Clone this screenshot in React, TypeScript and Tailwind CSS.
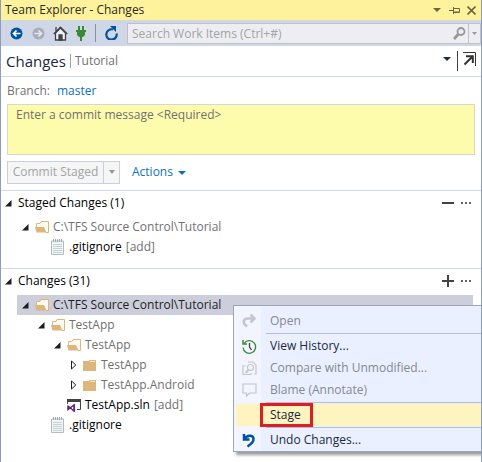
import React from "react";

function Caret({ className = "" }: { className?: string }) {
  return (
    <svg width="8" height="4" viewBox="0 0 8 4" className={className} aria-hidden="true">
      <path d="M0 0h8L4 4z" fill="currentColor" />
    </svg>
  );
}

function Expanded() {
  return (
    <svg width="7" height="7" viewBox="0 0 7 7" aria-hidden="true">
      <path d="M6.5 0v6.5H0z" fill="#1e1e1e" />
    </svg>
  );
}

function Collapsed() {
  return (
    <svg width="7" height="10" viewBox="0 0 7 10" aria-hidden="true">
      <path d="M1.500 1v8l4.300-4z" fill="#fff" stroke="#1e1e1e" />
    </svg>
  );
}

function FolderOpen() {
  return (
    <svg width="14" height="13" viewBox="0 0 14 13" aria-hidden="true">
      <path d="M1.500 7V2.500h3.500l1-2h7.500v11H11" fill="#fffaf0" stroke="#dcb67a" />
      <path d="M0 6h9l2.500 5.500H1.500z" fill="#dcb67a" />
    </svg>
  );
}

function FolderClosed() {
  return (
    <svg width="14" height="13" viewBox="0 0 14 13" aria-hidden="true">
      <path d="M0 2h5.500l1-1H13v11H0z" fill="#dcb67a" />
      <path d="M7 2.500h5" stroke="#f5e6c8" />
    </svg>
  );
}

function TextFile() {
  return (
    <svg width="14" height="16" viewBox="0 0 14 16" aria-hidden="true">
      <path d="M.5 2h12v13.500H.5z" fill="#f0f4f5" stroke="#b4babd" />
      <path d="M2.500 0v3M4.500 0v3M6.500 0v3M8.500 0v3M10.500 0v3" stroke="#a3abaf" />
      <path d="M2 5.500h9M2 7.500h9M2 9.500h9M2 11.500h9M2 13.500h9" stroke="#c6d2d6" />
    </svg>
  );
}

function Solution() {
  return (
    <svg width="15" height="14" viewBox="0 0 15 14" aria-hidden="true">
      <path d="M.5 6V1.500h13v10H10" fill="#fff" stroke="#424242" />
      <path d="M0 1h14v3H0z" fill="#424242" />
      <path d="M1 7.500v4l6-4.500v6L1 8M7.300 6.500v7" fill="none" stroke="#68217a" strokeWidth="1.500" />
    </svg>
  );
}

const indents = ["pl-[5px]", "pl-[21px]", "pl-[37px]", "pl-[53px]"];

type RowProps = {
  level: number;
  state?: "open" | "closed";
  icon: React.ReactNode;
  name: string;
  note?: string;
  tone?: string;
  selected?: boolean;
};

function TreeRow({ level, state, icon, name, note, tone = "text-[#717171]", selected }: RowProps) {
  return (
    <li
      role="treeitem"
      aria-level={level + 1}
      aria-selected={!!selected}
      className={`flex h-5 items-center whitespace-nowrap ${indents[level]} ${selected ? "bg-[#cccedb]" : ""}`}
    >
      <span className="flex w-[13px] shrink-0">
        {state && (
          <button type="button" aria-label={`Toggle ${name}`}>
            {state === "open" ? <Expanded /> : <Collapsed />}
          </button>
        )}
      </span>
      <span className="flex w-[18px] shrink-0">{icon}</span>
      <span className={tone}>{name}</span>
      {note && <span className="ml-1 text-[#717171]">{note}</span>}
    </li>
  );
}

function SectionHeader({ title, action }: { title: string; action: "minus" | "plus" }) {
  return (
    <div className="flex h-6 items-center pr-[9px] pl-1">
      <button type="button" aria-label={`Toggle ${title}`} className="w-[13px]">
        <Expanded />
      </button>
      <h2 className="flex-1 font-medium text-black">{title}</h2>
      <button type="button" aria-label={action === "plus" ? "Stage all" : "Unstage all"}>
        <svg width="12" height="12" viewBox="0 0 12 12">
          <path d={action === "plus" ? "M0 6h12M6 0v12" : "M0 6h12"} stroke="#424242" strokeWidth="2" />
        </svg>
      </button>
      <button type="button" aria-label={`More options for ${title}`} className="ml-[7px]">
        <svg width="11" height="12" viewBox="0 0 11 12" fill="#626262">
          <path d="M0 5h2v2H0zM4 5h2v2H4zM8 5h2v2H8z" />
        </svg>
      </button>
    </div>
  );
}

function MenuItem({ label, icon, disabled }: { label: string; icon?: React.ReactNode; disabled?: boolean }) {
  return (
    <button
      type="button"
      role="menuitem"
      disabled={disabled}
      className={`flex h-[22px] w-full items-center whitespace-nowrap ${disabled ? "text-[#858991]" : "text-[#1b293e]"}`}
    >
      <span className="flex w-9 pl-2">{icon}</span>
      {label}
    </button>
  );
}

function Separator() {
  return <div role="separator" className="my-px ml-8 h-px bg-[#b5bed2]" />;
}

function ContextMenu() {
  return (
    <div
      role="menu"
      className="absolute top-[305px] -right-px left-[232px] border border-r-0 border-[#9ba7b7] bg-[linear-gradient(90deg,#f2f4fe_27px,#eaf0ff_27px)] pt-1 shadow-[3px_3px_3px_#0006]"
    >
      <MenuItem
        label="Open"
        disabled
        icon={
          <svg width="15" height="14" viewBox="0 0 15 14" fill="none" stroke="#c3c6ce" strokeWidth="2.500">
            <path d="M5 12.500C0 9 1 4.500 6 4.500h6.500M8.500 .5l4 4-4 4" />
          </svg>
        }
      />
      <Separator />
      <MenuItem
        label="View History..."
        icon={
          <svg width="15" height="15" viewBox="0 0 15 15" fill="none">
            <path d="M2 4.500A6.300 6.300 0 1 1 1 8.500" stroke="#388a34" strokeWidth="1.300" />
            <path d="M1 1v4h4" stroke="#388a34" strokeWidth="1.500" />
            <path d="M7.500 4v4l2 3" stroke="#424242" strokeWidth="1.300" />
          </svg>
        }
      />
      <MenuItem
        label="Compare with Unmodified..."
        disabled
        icon={
          <svg width="15" height="15" viewBox="0 0 15 15" fill="none" stroke="#c3c6ce" strokeWidth="1.200">
            <path d="M3.500 5H1v8.500h8V12M6 1h5l3 3v9h-2" />
            <circle cx="8.500" cy="6.500" r="3" />
            <path d="m6.500 9-3 3" strokeWidth="2" />
          </svg>
        }
      />
      <MenuItem
        label="Blame (Annotate)"
        disabled
        icon={
          <svg width="15" height="14" viewBox="0 0 15 14" fill="none" stroke="#c3c6ce" strokeWidth="1.200">
            <path d="M1 1h13v9H7.500L4.500 13v-3H1z" />
          </svg>
        }
      />
      <Separator />
      <button type="button" role="menuitem" className="ml-[2px] flex h-[22px] w-full items-center bg-[#fdf4bf] pl-6 text-[#1b293e]">
        <span className="-my-1 flex h-6 w-[53px] items-center border-3 border-[#dc1f26] pl-[7px]">Stage</span>
      </button>
      <Separator />
      <MenuItem
        label="Undo Changes..."
        icon={
          <svg width="14" height="15" viewBox="0 0 14 15" fill="none" stroke="#00539c" strokeWidth="2.500">
            <path d="M2 1v5.500h5.500M2.500 6C5 2 11 1.500 11.500 5.500 12 9 9 11 5.500 13.500" />
          </svg>
        }
      />
    </div>
  );
}

export default function App() {
  return (
    <main className="relative min-h-screen overflow-hidden border-r border-l border-[#8e9bbc] bg-white font-['Open_Sans','Noto_Sans',sans-serif] text-xs leading-4 text-[#1e1e1e]">
      <header className="flex h-5 items-center bg-[#fff29d] pr-[5px] pl-1 text-[#4b4220]">
        <h1 className="flex-1 text-[#2b2b1c]">Team Explorer - Changes</h1>
        <button type="button" aria-label="Window options" className="text-[#75633d]"><Caret /></button>
        <button type="button" aria-label="Pin" className="ml-2">
          <svg width="12" height="9" viewBox="0 0 12 9" fill="none" stroke="#75633d">
            <path d="M0 4.500h4M4.500 1v7M4.500 2.500h6v4h-6M4.500 6h6" />
          </svg>
        </button>
        <button type="button" aria-label="Close" className="ml-[6px]">
          <svg width="9" height="9" viewBox="0 0 9 9" stroke="#75633d" strokeWidth="1.600">
            <path d="m.5.500 8 8m0-8-8 8" />
          </svg>
        </button>
      </header>

      <nav className="flex h-[26px] items-center bg-[#cfd6e5] pl-[9px]">
        <button type="button" aria-label="Back">
          <svg width="13" height="13" viewBox="0 0 13 13" fill="none">
            <circle cx="6.500" cy="6.500" r="6" fill="#00539c" />
            <path d="M10.500 6.500h-7M6.500 3.500l-3 3 3 3" stroke="#fff" strokeWidth="1.700" />
          </svg>
        </button>
        <button type="button" aria-label="Forward" disabled className="ml-[9px]">
          <svg width="13" height="13" viewBox="0 0 13 13" fill="none">
            <circle cx="6.500" cy="6.500" r="6" fill="#a9adb8" />
            <path d="M2.500 6.500h7M6.500 3.500l3 3-3 3" stroke="#e5e8f0" strokeWidth="1.700" />
          </svg>
        </button>
        <button type="button" aria-label="Home" className="ml-2">
          <svg width="15" height="15" viewBox="0 0 15 15" fill="none" stroke="#424242" strokeWidth="1.300">
            <path d="M.7 8 7.500 1.200 14.300 8M3 1v4" />
            <path d="M2.500 7v7h10V7L7.500 2z" fill="#eef0f5" />
            <path d="M6 14V9h3v5z" fill="#424242" />
          </svg>
        </button>
        <button type="button" aria-label="Connect" className="ml-2">
          <svg width="10" height="15" viewBox="0 0 10 15" fill="#388a34">
            <path d="M2 0h2v4H2zM6 0h2v4H6zM0 4h10v2H9v3L7 11H6v4H4v-4H3L1 9V6H0z" />
          </svg>
        </button>
        <span className="ml-[9px] h-[18px] w-px bg-[#8591a8]" />
        <button type="button" aria-label="Refresh" className="ml-[9px]">
          <svg width="13" height="14" viewBox="0 0 13 14" fill="none" stroke="#00539c" strokeWidth="2.200">
            <path d="M11.600 7.500A5.200 5.200 0 1 1 8 3.500" />
            <path d="M5 0h6v6z" fill="#00539c" stroke="none" />
          </svg>
        </button>
        <div className="ml-[9px] flex h-[21px] min-w-0 flex-1 items-center border border-[#bfc2cc] bg-[#eeeef2]">
          <input
            type="search"
            aria-label="Search work items"
            placeholder="Search Work Items (Ctrl+#)"
            className="h-full min-w-0 flex-1 bg-transparent pl-1 outline-none placeholder:text-[#a2a4a5]"
          />
          <button type="button" aria-label="Search" className="mr-[2px]">
            <svg width="13" height="13" viewBox="0 0 13 13" fill="none" stroke="#989898">
              <circle cx="8" cy="4.500" r="3.500" strokeWidth="1.800" />
              <path d="m5.500 7-4.500 5" strokeWidth="2.800" />
            </svg>
          </button>
          <button type="button" aria-label="Search options" className="flex h-full w-3 items-center justify-center border-l border-[#bfc2cc] text-[#989898]">
            <svg width="5" height="3" viewBox="0 0 5 3"><path d="M0 0h5L2.500 3z" fill="currentColor" /></svg>
          </button>
        </div>
      </nav>

      <div className="flex h-[31px] items-center border-b border-[#cfd6e5] px-[5px]">
        <span className="text-[15px] text-[#1b293e]">Changes</span>
        <span className="mx-1 h-[14px] w-px bg-[#a0a0a0]" />
        <span className="flex-1 text-[#717171]">Tutorial</span>
        <button type="button" aria-label="Page options" className="-mt-1 text-[#1b293e]"><Caret /></button>
        <span className="ml-[6px] h-5 w-px bg-[#424242]" />
        <button type="button" aria-label="Undock" className="-mt-1 ml-[5px]">
          <svg width="13" height="14" viewBox="0 0 13 14" fill="none" stroke="#333">
            <path d="M0 .5h12.500V14" />
            <path d="M1.500 12.500 9 5M3 4.200h6.800V11" strokeWidth="2" />
          </svg>
        </button>
      </div>

      <form>
        <div className="flex h-[27px] items-center gap-[7px] px-[6px] pt-px">
          <span className="text-[#717171]">Branch:</span>
          <a href="#branch" className="text-[#0e70c0]">master</a>
        </div>
        <div className="px-[6px]">
          <textarea
            aria-label="Commit message"
            placeholder="Enter a commit message <Required>"
            className="block h-[51px] w-full resize-none border border-[#d6d8d0] bg-[#fdfbac] px-2 py-[2px] outline-none placeholder:text-[#717171]"
          />
        </div>
        <div className="flex h-[35px] items-center px-[6px] pb-px">
          <div className="flex h-[23px] border border-[#cccedb] bg-[#f5f5f5] text-[#a2a4a5]">
            <button type="button" disabled className="w-[95px] whitespace-nowrap">Commit Staged</button>
            <button type="button" disabled aria-label="Commit options" className="flex w-4 items-center justify-center border-l border-[#cccedb]">
              <svg width="6" height="4" viewBox="0 0 6 4"><path d="M0 0h6L3 4z" fill="#989898" /></svg>
            </button>
          </div>
          <button type="button" className="ml-3 flex items-center gap-[5px] text-[#0e70c0]">
            Actions <Caret className="mt-[2px]" />
          </button>
        </div>
      </form>

      <section className="h-[78px] border-t border-[#cfd6e5]">
        <SectionHeader title="Staged Changes (1)" action="minus" />
        <ul role="tree" aria-label="Staged changes" className="mr-2 ml-4 pt-[2px]">
          <TreeRow level={0} state="open" icon={<FolderOpen />} name={"C:\\TFS Source Control\\Tutorial"} />
          <TreeRow level={1} icon={<TextFile />} name=".gitignore" note="[add]" tone="text-black" />
        </ul>
      </section>

      <section className="border-t border-[#cfd6e5]">
        <SectionHeader title="Changes (31)" action="plus" />
        <ul role="tree" aria-label="Changes" className="mr-2 ml-4 pt-[2px]">
          <TreeRow level={0} state="open" icon={<FolderOpen />} name={"C:\\TFS Source Control\\Tutorial"} tone="text-[#1e1e1e]" selected />
          <TreeRow level={1} state="open" icon={<FolderOpen />} name="TestApp" />
          <TreeRow level={2} state="open" icon={<FolderOpen />} name="TestApp" />
          <TreeRow level={3} state="closed" icon={<FolderClosed />} name="TestApp" />
          <TreeRow level={3} state="closed" icon={<FolderClosed />} name="TestApp.Android" />
          <TreeRow level={2} icon={<Solution />} name="TestApp.sln" note="[add]" tone="text-black" />
          <TreeRow level={1} icon={<TextFile />} name=".gitignore" tone="text-black" />
        </ul>
      </section>

      <ContextMenu />
    </main>
  );
}
